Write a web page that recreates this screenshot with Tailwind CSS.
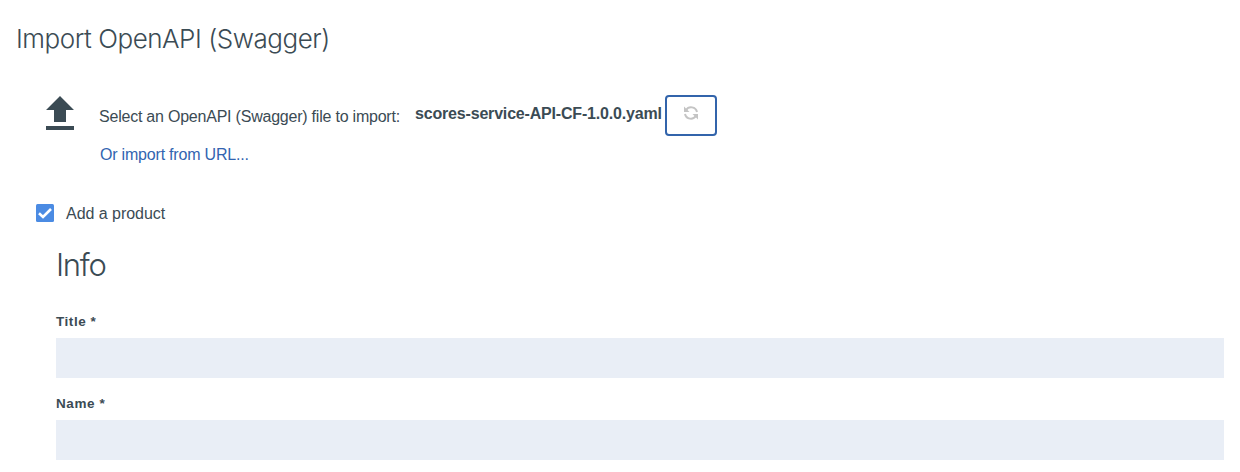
<!DOCTYPE html>
<html lang="en">
<head>
<meta charset="utf-8">
<title>Import OpenAPI (Swagger)</title>
<script src="https://cdn.jsdelivr.net/npm/@tailwindcss/browser@4"></script>
</head>
<body class="h-[472px] overflow-hidden bg-white px-4 font-['Liberation_Sans',Arial,sans-serif] text-[#3b4b54]">
  <h1 class="pt-[19px] font-['Inter',sans-serif] text-[26px] leading-10 font-light tracking-[-0.46px] whitespace-nowrap"><span>Import OpenAPI (Swagger)</span></h1>

  <section class="mt-9 flex items-start pl-[30px]">
    <svg class="mt-px h-[34px] w-7 shrink-0" viewBox="0 0 28 34" fill="#3b4b54"><path d="M14 0L28 14H20V26H8V14H0Z"/><path d="M0 30H28V34H0Z"/></svg>
    <div class="ml-[25px]">
      <div class="flex h-[41px] items-start whitespace-nowrap">
        <label class="w-[316px] pt-2.5 text-base leading-6 tracking-[-0.22px]"><span>Select an OpenAPI (Swagger) file to import:</span></label>
        <span class="w-[250px] pt-[7px] text-base leading-6 font-bold tracking-[-0.18px]"><span>scores-service-API-CF-1.0.0.yaml</span></span>
        <button class="flex h-[41px] w-[52px] justify-center rounded-[4px] border-2 border-[#3264ab] pt-2" aria-label="Change file">
          <svg class="h-4 w-4" viewBox="0 0 16 16" fill="none" stroke="#c4c4c4" stroke-width="2"><path d="M3 5.2A6 6 0 0 1 14 7"/><path d="M13 10.8A6 6 0 0 1 2 9"/><path d="M1 1.5V7H6.5Z" fill="#c4c4c4" stroke="none"/><path d="M15 14.5V9H9.5Z" fill="#c4c4c4" stroke="none"/></svg>
        </button>
      </div>
      <a class="mt-[7px] ml-px block text-base leading-6 tracking-[-0.2px] whitespace-nowrap text-[#3264b0]"><span>Or import from URL...</span></a>
    </div>
  </section>

  <label class="mt-[34px] flex h-6 items-center pl-5 text-base tracking-[-0.03px]">
    <svg class="h-[18px] w-[18px]" viewBox="0 0 18 18"><rect width="18" height="18" rx="1.5" fill="#4b8be3"/><path d="M3 9.3L7 13L15 5" fill="none" stroke="#fff" stroke-width="2.6"/></svg>
    <span class="ml-3 pt-0.5">Add a product</span>
  </label>

  <section class="pl-10">
    <h2 class="mt-5 h-10 font-['Inter',sans-serif] text-[31px] leading-10 font-light tracking-[-1.3px]"><span>Info</span></h2>
    <label class="mt-[27px] block h-[26px] text-[13.5px] leading-5 font-bold tracking-[0.55px]"><span>Title *</span></label>
    <div class="h-10 bg-[#e9eef6]"></div>
    <label class="mt-4 block h-[26px] text-[13.5px] leading-5 font-bold tracking-[0.6px]"><span>Name *</span></label>
    <div class="h-10 bg-[#e9eef6]"></div>
  </section>
</body>
</html>
